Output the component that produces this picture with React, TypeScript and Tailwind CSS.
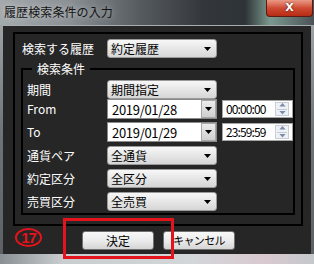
import React from 'react'

const jp = "font-['Noto_Sans_CJK_JP','Noto_Sans',sans-serif]"

function Arrow() {
    return (
        <svg width="7" height="4" viewBox="0 0 7 4" className="shrink-0">
            <path d="M0 0h7L3.5 4z" fill="#000" />
        </svg>
    )
}

function Select({ value }: { value: string }) {
    return (
        <div className="w-[110px] h-[19px] rounded-[3px] border border-[#9a9a9a] bg-gradient-to-b from-[#f7f7f7] to-[#d6d6d6] flex items-center pl-[3px] pr-[5px] text-[12px] leading-none text-black">
            <span>{value}</span>
            <span className="ml-auto">
                <Arrow />
            </span>
        </div>
    )
}

function DateBox({ value }: { value: string }) {
    return (
        <div className="w-[110px] h-[20px] bg-white border border-[#8a8a8a] flex items-stretch">
            <span className="flex-1 flex items-center pl-[4px] text-[13px] leading-none text-black tracking-[-0.3px]">{value}</span>
            <span className="w-[15px] border border-[#a7a7a7] bg-gradient-to-b from-[#ececec] to-[#cfcfcf] flex items-center justify-center">
                <Arrow />
            </span>
        </div>
    )
}

function TimeBox({ value }: { value: string }) {
    return (
        <div className="ml-[5px] w-[71px] h-[18px] bg-white border border-[#a5a5a5] flex items-center">
            <span className="flex-1 pl-[3px] text-[12px] leading-none text-black tracking-[-0.9px]">{value}</span>
            <span className="mr-[3px] w-[14px] h-[14px] border border-[#c9ced6] bg-[#eef1f5] flex flex-col items-center justify-center gap-[2px]">
                <svg width="7" height="4" viewBox="0 0 7 4"><path d="M3.5 0L7 4H0z" fill="#7d8ca8" /></svg>
                <span className="w-[10px] h-px bg-[#c4cad4]" />
                <svg width="7" height="4" viewBox="0 0 7 4"><path d="M0 0h7L3.5 4z" fill="#7d8ca8" /></svg>
            </span>
        </div>
    )
}

function Row({ label, className = '', children }: { label: string; className?: string; children: React.ReactNode }) {
    return (
        <div className={`flex items-center ${className}`}>
            <span className="w-[80px] text-[12px] leading-none text-white">{label}</span>
            {children}
        </div>
    )
}

function Button({ children }: { children: React.ReactNode }) {
    return (
        <div className="w-[72px] h-[19px] rounded-[3px] border border-[#707070] bg-gradient-to-b from-[#f8f8f8] via-[#ececec] to-[#d5d5d5] flex items-center justify-center text-black leading-none">
            {children}
        </div>
    )
}

export default function App() {
    return (
        <div className={`w-[314px] h-[264px] relative overflow-hidden flex flex-col bg-gradient-to-b from-[#a9adb0] via-[#6f7478] to-[#5a5f63] ${jp}`}>
            {/* title bar */}
            <div className="h-[25px] bg-[linear-gradient(90deg,#a4a9ac_0%,#8a9094_22%,#555a5e_45%,#33373b_65%,#2e3337_78%,#7a9a8e_86%,#4b5257_100%)] flex items-start">
                <span className="ml-[4px] mt-[4px] text-[12px] leading-[15px] text-[#141414] tracking-[0.1px] [text-shadow:0_0_6px_rgba(255,255,255,0.6)]">
                    履歴検索条件の入力
                </span>
            </div>
            <div className="absolute top-0 left-[266px] w-[47px] h-[17px] rounded-b-[4px] border border-t-0 border-[#5c1a12] bg-gradient-to-b from-[#e99a88] via-[#cf4a32] to-[#b52b14] flex items-center justify-center">
                <span className="text-[11px] leading-[12px] font-bold text-white font-['DejaVu_Sans',sans-serif] [text-shadow:0_0_2px_#3a0a04]">X</span>
            </div>

            {/* client */}
            <div className="mx-[3px] h-[229px] border-t border-[#a7acaf] bg-[#262626] flex flex-col">
                <div className="ml-[10px] mt-[6px] w-[290px] h-[194px] border-2 border-black flex flex-col">
                    <div className="ml-[7px] mt-[5px] flex items-center">
                        <span className="w-[85px] text-[12px] leading-none text-white">検索する履歴</span>
                        <Select value="約定履歴" />
                    </div>

                    <div className="relative ml-[6px] mt-[10px] w-[274px] h-[147px] border-2 border-black flex flex-col pl-[4px]">
                        <span className="absolute left-[9px] top-[-8px] px-[5px] bg-[#262626] text-[12px] leading-[14px] text-white">検索条件</span>
                        <Row label="期間" className="mt-[10px]">
                            <Select value="期間指定" />
                        </Row>
                        <Row label="From">
                            <DateBox value="2019/01/28" />
                            <TimeBox value="00:00:00" />
                        </Row>
                        <Row label="To" className="mt-[3px]">
                            <DateBox value="2019/01/29" />
                            <TimeBox value="23:59:59" />
                        </Row>
                        <Row label="通貨ペア" className="mt-[4px]">
                            <Select value="全通貨" />
                        </Row>
                        <Row label="約定区分" className="mt-[4px]">
                            <Select value="全区分" />
                        </Row>
                        <Row label="売買区分" className="mt-[4px]">
                            <Select value="全売買" />
                        </Row>
                    </div>
                </div>

                <div className="ml-[79px] mt-[5px] flex gap-[9px]">
                    <Button>
                        <span className="text-[12px]">決定</span>
                    </Button>
                    <Button>
                        <span className="text-[11px] tracking-[-0.6px]">キャンセル</span>
                    </Button>
                </div>
            </div>

            {/* bottom frame */}
            <div className="flex-1 bg-[linear-gradient(90deg,#8a8f93_0%,#c9cdd0_20%,#d3d6d9_60%,#d8c9cf_85%,#c4c8cb_100%)]" />

            {/* annotations */}
            <div className="absolute left-[63px] top-[218px] w-[111px] h-[41px] border-[3px] border-[#e5131b]" />
            <div className="absolute left-[15px] top-[228px] w-[27px] h-[19px] rounded-[50%] border-[2.5px] border-[#e5131b] flex items-center justify-center">
                <span className="text-[15px] leading-none font-bold text-[#e5131b] tracking-[-1px] font-['Liberation_Sans',sans-serif]">17</span>
            </div>
        </div>
    )
}
